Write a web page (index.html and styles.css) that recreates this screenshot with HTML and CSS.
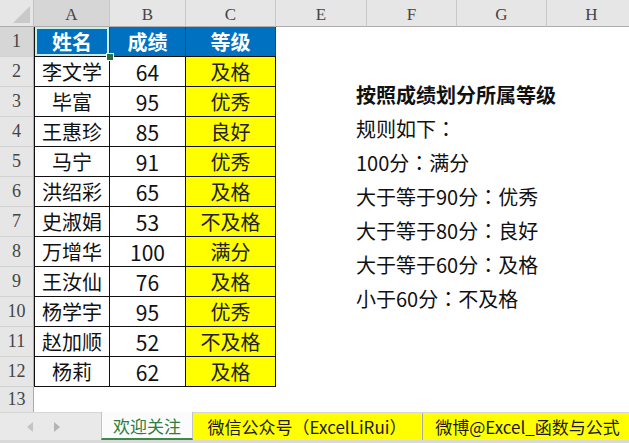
FILE: index.html
```html
<!DOCTYPE html>
<html lang="zh-CN">
<head>
    <meta charset="UTF-8">
    <title>按照成绩划分所属等级</title>
    <link rel="stylesheet" href="styles.css">
</head>
<body>

    <div class="sheet">
        <div class="corner"></div>
        <div class="col-head active">A</div>
        <div class="col-head">B</div>
        <div class="col-head">C</div>
        <div class="col-head">E</div>
        <div class="col-head">F</div>
        <div class="col-head">G</div>
        <div class="col-head">H</div>

        <div class="row-head active">1</div>
        <div class="cell head first selected">姓名<span class="handle"></span></div>
        <div class="cell head">成绩</div>
        <div class="cell head">等级</div>
        <div class="blank"></div>

        <div class="row-head">2</div>
        <div class="cell first">李文学</div><div class="cell num">64</div><div class="cell grade">及格</div>
        <div class="blank"></div>

        <div class="row-head">3</div>
        <div class="cell first">毕富</div><div class="cell num">95</div><div class="cell grade">优秀</div>
        <div class="blank"></div>

        <div class="row-head">4</div>
        <div class="cell first">王惠珍</div><div class="cell num">85</div><div class="cell grade">良好</div>
        <div class="blank"></div>

        <div class="row-head">5</div>
        <div class="cell first">马宁</div><div class="cell num">91</div><div class="cell grade">优秀</div>
        <div class="blank"></div>

        <div class="row-head">6</div>
        <div class="cell first">洪绍彩</div><div class="cell num">65</div><div class="cell grade">及格</div>
        <div class="blank"></div>

        <div class="row-head">7</div>
        <div class="cell first">史淑娟</div><div class="cell num">53</div><div class="cell grade">不及格</div>
        <div class="blank"></div>

        <div class="row-head">8</div>
        <div class="cell first">万增华</div><div class="cell num">100</div><div class="cell grade">满分</div>
        <div class="blank"></div>

        <div class="row-head">9</div>
        <div class="cell first">王汝仙</div><div class="cell num">76</div><div class="cell grade">及格</div>
        <div class="blank"></div>

        <div class="row-head">10</div>
        <div class="cell first">杨学宇</div><div class="cell num">95</div><div class="cell grade">优秀</div>
        <div class="blank"></div>

        <div class="row-head">11</div>
        <div class="cell first">赵加顺</div><div class="cell num">52</div><div class="cell grade">不及格</div>
        <div class="blank"></div>

        <div class="row-head">12</div>
        <div class="cell first">杨莉</div><div class="cell num">62</div><div class="cell grade">及格</div>
        <div class="blank"></div>

        <div class="row-head last">13</div>
        <div class="blank wide"></div>
    </div>

    <!-- floating text box over the sheet -->
    <div class="note">
        <p class="note-title">按照成绩划分所属等级</p>
        <p>规则如下<span class="punct" lang="zh-TW">：</span></p>
        <p>100分<span class="punct" lang="zh-TW">：</span>满分</p>
        <p>大于等于90分<span class="punct" lang="zh-TW">：</span>优秀</p>
        <p>大于等于80分<span class="punct" lang="zh-TW">：</span>良好</p>
        <p>大于等于60分<span class="punct" lang="zh-TW">：</span>及格</p>
        <p>小于60分<span class="punct" lang="zh-TW">：</span>不及格</p>
    </div>

    <div class="tabs">
        <div class="tab-nav">
            <svg width="8" height="12" viewBox="0 0 8 12"><polygon points="7,1 1,6 7,11" fill="#c4c4c4"/></svg>
            <svg width="8" height="12" viewBox="0 0 8 12"><polygon points="1,1 7,6 1,11" fill="#b4b4b4"/></svg>
        </div>
        <div class="tab current">欢迎关注</div>
        <div class="tab yellow tab-wx">微信公众号<span class="punct" lang="zh-TW">（</span>ExcelLiRui<span class="punct" lang="zh-TW">）</span></div>
        <div class="tab-sep"></div>
        <div class="tab yellow tab-wb">微博@Excel_函数与公式</div>
    </div>

</body>
</html>
```

FILE: styles.css
```css
body {
    margin: 0;
    width: 629px;
    height: 443px;
    overflow: hidden;
    position: relative;
    background: #ffffff;
    font-family: "Noto Sans CJK SC", "Noto Sans", sans-serif;
}

/* centred full-width punctuation, like the YaHei look */
.punct {
    font-family: "Noto Sans CJK TC", "Noto Sans CJK SC", sans-serif;
}

.sheet {
    display: grid;
    grid-template-columns: 34px 76px 76px 90px 91px 90px 90px 90px;
    grid-template-rows: 27px repeat(12, 30px) 30px;
    height: 412px;
    overflow: hidden;
}

.corner {
    background: #e6e6e6;
    border-right: 1px solid #c4c4c4;
    border-bottom: 1px solid #acacac;
    box-sizing: border-box;
    position: relative;
}

.corner::after {
    content: "";
    position: absolute;
    right: 3px;
    bottom: 3px;
    width: 0;
    height: 0;
    border-left: 17px solid transparent;
    border-bottom: 17px solid #c9c9c9;
}

.col-head,
.row-head {
    background: #e6e6e6;
    color: #444444;
    font-family: "Liberation Serif", "DejaVu Serif", serif;
    font-size: 17px;
    display: flex;
    align-items: center;
    justify-content: center;
    box-sizing: border-box;
}

.col-head {
    border-right: 1px solid #c8c8c8;
    border-bottom: 1px solid #acacac;
    padding-top: 4px;
}

.row-head {
    border-right: 1px solid #acacac;
    border-bottom: 1px solid #d2d2d2;
    font-size: 18px;
}

.col-head.active,
.row-head.active {
    background: #d6d6d6;
}

.row-head.last {
    border-bottom: none;
    align-items: flex-start;
    padding-top: 2px;
}

.cell {
    box-sizing: border-box;
    border-right: 1px solid #111111;
    border-bottom: 1px solid #111111;
    display: flex;
    align-items: center;
    justify-content: center;
    font-size: 20px;
    color: #111111;
    position: relative;
}

.cell.first {
    border-left: 1px solid #111111;
}

.cell.head {
    background: #0070c0;
    color: #ffffff;
    font-weight: bold;
    border-right-color: #0b4f86;
    border-bottom-color: #111111;
}

.cell.selected {
    box-shadow: inset 0 0 0 2px #c9efe6;
}

.handle {
    position: absolute;
    right: -5px;
    bottom: -5px;
    width: 6px;
    height: 6px;
    background: #217346;
    border: 1px solid #ffffff;
    z-index: 2;
}

.cell.num {
    font-size: 21px;
}

.cell.grade {
    background: #ffff00;
    color: #222222;
}

.blank {
    grid-column: span 4;
}

.blank.wide {
    grid-column: span 7;
}

.note {
    position: absolute;
    left: 356px;
    top: 78px;
    font-size: 20px;
    color: #111111;
}

.note p {
    margin: 0;
    line-height: 34px;
}

.note .note-title {
    font-weight: bold;
}

.tabs {
    display: flex;
    height: 31px;
    background: #e9e9e9;
    border-top: 1px solid #d6d6d6;
    box-sizing: border-box;
    border-bottom: 3px solid #d9d9d9;
}

.tab-nav {
    width: 101px;
    display: flex;
    align-items: center;
    gap: 19px;
    padding-left: 26px;
    box-sizing: border-box;
}

.tab {
    display: flex;
    align-items: center;
    justify-content: center;
    font-size: 17px;
    box-sizing: border-box;
}

.tab.current {
    width: 92px;
    background: #fbfbfb;
    color: #2d7d3e;
    border-left: 1px solid #c4c4c4;
    border-right: 1px solid #c4c4c4;
    border-bottom: 2px solid #3b8a4c;
    margin-top: -1px;
}

.tab.yellow {
    background: #ffff00;
    color: #1a1a1a;
}

.tab-wx {
    width: 228px;
}

.tab-sep {
    width: 4px;
    background: #ffff00;
    border-left: 1px solid #a8a8a8;
    box-sizing: border-box;
    margin-left: 1px;
}

.tab-wb {
    flex: 1;
}
```
